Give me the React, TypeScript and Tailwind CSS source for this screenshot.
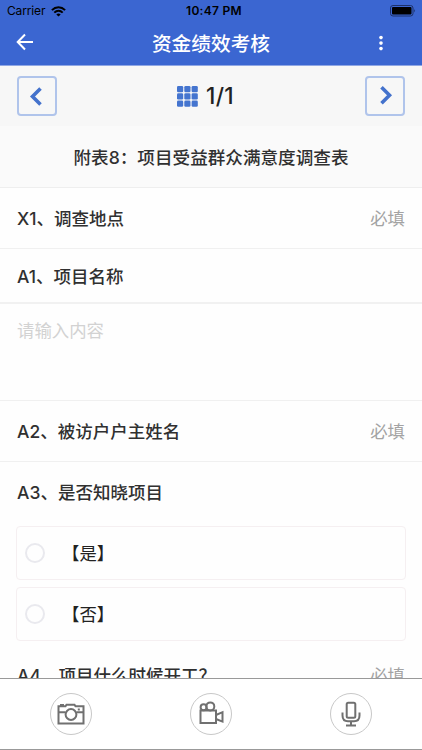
import React from "react";

const CJK = "font-['Inter','Noto_Sans_CJK_SC',sans-serif]";

function StatusBar() {
  return (
    <div className="flex h-[22px] items-center justify-between pl-[7px] pr-[6px] text-black">
      <div className="flex w-[142px] items-center gap-[6px]">
        <span className="text-[12px] leading-none tracking-[-0.15px]">Carrier</span>
        <svg width="15" height="11" viewBox="0 0 15 11" fill="none" stroke="black" strokeWidth="2">
          <path d="M0.9 4.1C4.7 0.3 10.3 0.3 14.1 4.1" />
          <path d="M3.3 6.6C5.8 4.2 9.2 4.2 11.7 6.6" />
          <path d="M7.5 10.5L5.3 8.4Q7.5 6.6 9.7 8.4Z" fill="black" stroke="none" />
        </svg>
      </div>
      <span className="ml-[3px] text-[12px] font-semibold leading-none tracking-[0.3px]">10:47 PM</span>
      <div className="flex w-[140px] justify-end">
        <svg width="26" height="12" viewBox="0 0 26 12">
          <rect x="0.5" y="0.5" width="22.5" height="10.5" rx="2.5" fill="none" stroke="#1d3169" />
          <rect x="2" y="2" width="19.5" height="7.5" rx="1" fill="black" />
          <path d="M24.2 4Q26 5.7 24.2 7.5Z" fill="#1d3169" />
        </svg>
      </div>
    </div>
  );
}

function NavBar() {
  return (
    <div className="flex h-[43px] items-center justify-between pl-[16px] pr-[36px] text-white">
      <svg width="18" height="18" viewBox="0 0 18 18" fill="none" stroke="white" strokeWidth="2" className="mb-[3px]">
        <path d="M17 9H2M9 1.5L1.7 9L9 16.5" />
      </svg>
      <h1 className="ml-[12px] pt-[2px] text-[19.7px] font-medium leading-none">资金绩效考核</h1>
      <svg width="10" height="18" viewBox="0 0 10 18" fill="white">
        <circle cx="5" cy="2.6" r="1.8" />
        <circle cx="5" cy="8.1" r="1.8" />
        <circle cx="5" cy="13.6" r="1.8" />
      </svg>
    </div>
  );
}

function PagerButton({ d, label }: { d: string; label: string }) {
  return (
    <button aria-label={label} className="flex h-[40px] w-[40px] items-center justify-center rounded-[4px] border-2 border-[#b0c4eb]">
      <svg width="36" height="36" viewBox="0 0 36 36" fill="none" stroke="#4472cc" strokeWidth="3.6" className="shrink-0">
        <path d={d} />
      </svg>
    </button>
  );
}

function Pager() {
  return (
    <div className="flex h-[61px] items-center justify-between border-t border-[#90a7e4] bg-[#f7f7f7] px-[17px]">
      <PagerButton label="上一页" d="M21.5 10.5L13.5 18.5L21.5 26.5" />
      <div className="mr-[11px] flex items-center gap-[8px]">
        <svg width="21" height="21" viewBox="0 0 21 21" fill="#4474cf">
          {[0, 7.3, 14.6].map((y) =>
            [0, 7.3, 14.6].map((x) => <rect key={`${x}-${y}`} x={x} y={y} width="6.2" height="6.2" rx="1.3" />)
          )}
        </svg>
        <span className="pt-[1px] text-[22.5px] font-medium leading-none tracking-[0.3px] text-[#222]">1/1</span>
      </div>
      <PagerButton label="下一页" d="M14.5 9.3L22.5 17.3L14.5 25.3" />
    </div>
  );
}

function Question({ title, required, className }: { title: string; required?: boolean; className: string }) {
  return (
    <div className={`flex items-center justify-between px-[17px] ${className}`}>
      <span className="text-[17.5px] font-medium leading-none text-[#303030]">{title}</span>
      {required && <span className="text-[17.4px] leading-none text-[#a3a3a3]">必填</span>}
    </div>
  );
}

function Option({ label }: { label: string }) {
  return (
    <label className="flex h-[54px] items-center rounded-[4px] border border-[#f5eff1] pl-[8px]">
      <span className="h-[20px] w-[20px] rounded-full border-2 border-[#e9e9ee]" />
      <span className="ml-[17px] pt-[2px] text-[17.4px] leading-none text-[#222]">{label}</span>
    </label>
  );
}

function MediaButton({ label, children }: { label: string; children: React.ReactNode }) {
  return (
    <button aria-label={label} className="flex h-[42px] w-[42px] items-center justify-center rounded-full border border-[#c8c8c8]">
      <svg width="40" height="40" viewBox="0 0 40 40" fill="none" stroke="#707070" strokeWidth="2" className="shrink-0">
        {children}
      </svg>
    </button>
  );
}

export default function App() {
  return (
    <main className={`flex h-[750px] w-[422px] flex-col overflow-hidden bg-white ${CJK}`}>
      <header className="bg-[#3b66d1]">
        <StatusBar />
        <NavBar />
      </header>
      <Pager />
      <section className="min-h-0 flex-1 overflow-hidden bg-[#fefefe]">
        <div className="flex h-[62px] items-center justify-center border-b border-[#eeeeee] bg-[#fafafa] pt-[2px] text-[17.6px] font-medium leading-none text-[#303030]">
          附表8：项目受益群众满意度调查表
        </div>
        <Question title="X1、调查地点" required className="h-[61px] border-b border-[#f0f0f0] pt-[2px]" />
        <Question title="A1、项目名称" className="h-[55px] border-b-2 border-[#f1f1f1] pt-[2px]" />
        <div className="h-[97px] border-b border-[#f0f0f0] px-[17px] pt-[18px] text-[17.4px] leading-none text-[#d2d2d2]">
          请输入内容
        </div>
        <Question title="A2、被访户户主姓名" required className="h-[61px] border-b border-[#f0f0f0] pt-[2px]" />
        <Question title="A3、是否知晓项目" className="h-[62px]" />
        <div className="flex flex-col gap-[7px] px-[16px] pt-[2px]">
          <Option label="【是】" />
          <Option label="【否】" />
        </div>
        <Question title="A4、项目什么时候开工？" required className="mt-[4px] h-[62px]" />
      </section>
      <footer className="flex h-[72px] items-center justify-between border-y border-[#999] px-[50px]">
        <MediaButton label="拍照">
          <path d="M7.5 12.3H14.5L15.5 10.8H23.5L24.5 12.3H32.5V29.5H7.5Z" />
          <path d="M9 11H13M7.5 18.3H14.5M25.5 18.3H32.5" />
          <circle cx="20" cy="20.5" r="5.4" />
          <rect x="26.8" y="14.5" width="2" height="2" fill="#707070" stroke="none" />
        </MediaButton>
        <MediaButton label="录像">
          <rect x="9.5" y="16.5" width="15.5" height="12.5" />
          <circle cx="12.6" cy="13.2" r="3" />
          <circle cx="19.3" cy="12.4" r="4" />
          <path d="M25 21L31.5 18.2V27.6L25 25" />
        </MediaButton>
        <MediaButton label="录音">
          <rect x="15.7" y="8.8" width="8.6" height="15" rx="1.5" />
          <path d="M11.5 18.5V21.5Q11.5 27.2 17 27.2H23Q28.5 27.2 28.5 21.5V18.5M20 27.2V31.3M15 31.5H25" />
        </MediaButton>
      </footer>
    </main>
  );
}
